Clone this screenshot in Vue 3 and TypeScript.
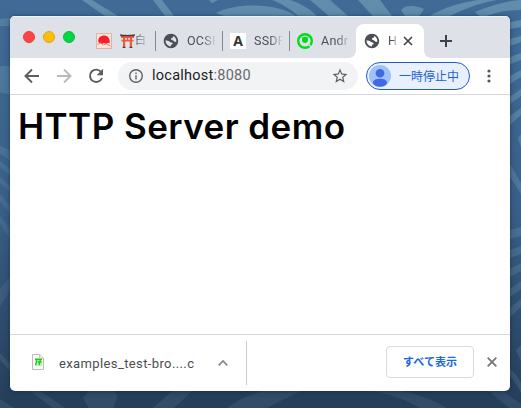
<script setup lang="ts">
interface Tab {
  icon: 'sun' | 'globe' | 'letter' | 'ring'
  title: string
  torii?: boolean
}

const tabs: Tab[] = [
  { icon: 'sun', title: '白', torii: true },
  { icon: 'globe', title: 'OCSP' },
  { icon: 'letter', title: 'SSDP' },
  { icon: 'ring', title: 'Andr' },
]

const globePath =
  'M12 2C6.48 2 2 6.48 2 12s4.48 10 10 10 10-4.48 10-10S17.52 2 12 2zM4.4 11.5c2.500 0 4.200.4 5.700 1.600 1.600 1.300 3.900.4 4.300 2.100.3 1.700-2.200 1.600-2.500 2.700-.2.800.2 1.200-.3 1.700C7.700 19.400 4.400 16 4.400 11.500zM19.500 12.900c-1 .8-2.800.2-3.600-1-.8-1.100-2.300-.7-3.400-1.600-1.100-1-.5-2.300.8-2.600 1.200-.3 2-.9 1.600-2.700 2.800 1.200 4.800 4 4.600 7.900z'
</script>

<template>
  <div class="desktop">
    <svg class="waves" viewBox="0 0 521 408" aria-hidden="true">
      <defs>
        <linearGradient id="sea" x1="0" y1="0" x2="0" y2="1">
          <stop offset="0" stop-color="#416b96" />
          <stop offset=".5" stop-color="#3b6088" />
          <stop offset="1" stop-color="#253e5a" />
        </linearGradient>
        <linearGradient id="foam" gradientUnits="userSpaceOnUse" x1="0" y1="0" x2="0" y2="408">
          <stop offset="0" stop-color="#628dac" />
          <stop offset=".5" stop-color="#4b7397" />
          <stop offset="1" stop-color="#364f6b" />
        </linearGradient>
      </defs>
      <rect width="521" height="408" fill="url(#sea)" />
      <g fill="url(#foam)">
        <path d="M82 0h10l26 16h-13zM153 0h9l12 16h-9zM209 0h9l-6 3zM216 13c20-11 62-10 80 3h-72zM272 0h18c12 4 21 10 27 16h-19c-7-7-16-12-26-16zM310 0h20l18 16h-19zM358 0h22l12 16h-19zM401 10c6-7 18-3 23-1l-5 7h-14zM430 16c15-9 29-13 48-16h19c-21 4-33 9-47 16z" />
        <path d="M475 12c14-6 30-11 46-12v10c-14 0-28 3-39 8z" />
        <path d="M510 22l11-2v7l-11 2zM510 39l11-3v6l-11 4zM510 57l11-4v7l-11 4zM510 76l11-6v7l-11 7zM510 97l11-8v7l-11 8zM510 116l11-8v7l-11 10zM518 138l3-4v13zM510 164l11 19v11l-11-17z" />
        <path d="M510 230l11-3v9l-11 3zM510 250l11-4v8l-11 4zM510 269l11-6v8l-11 6zM510 289l11-8v8l-11 8zM510 308l11-9v8l-11 10zM516 350l5-5v16z" />
        <path opacity=".6" d="M0 19l10-1v8H0zM0 67c4-2 7-1 10 0v28L0 92zM0 146l10 4v10l-10-6zM0 161l10 8v6l-10-8zM0 177l10 9v6l-10-9zM0 194l10 12v8L0 201zM0 216l10 13v10L0 224zM0 289l10-12v13L0 307z" />
        <path opacity=".8" d="M0 353l10 11v7L0 360zM0 399l14 9H0zM30 391h10l25 17H53zM89 391h25l4 5-5 12H89l-6-10zM172 391h20l-18 17h-21zM264 391h37c-10 5-21 10-34 17h-40c12-9 24-14 37-17zM372 391h30c15 3 33 10 45 17h-27c-15-9-30-14-48-17zM489 391h14l18 13v4h-12z" />
        <path d="M510 369c4 3 8 8 11 14v10c-3-7-7-13-11-17z" />
      </g>
    </svg>

    <main class="window">
      <header class="tab-strip">
        <div class="lights"><i class="red" /><i class="yellow" /><i class="green" /></div>
        <div class="tabs">
          <div v-for="tab in tabs" :key="tab.title" class="tab">
            <svg v-if="tab.icon === 'sun'" class="favicon" viewBox="0 0 16 16">
              <rect x=".5" y=".5" width="15" height="15" fill="#f2e5da" stroke="#e3b3aa" />
              <path d="M2.500 9.500C1.500 5 4.500 2.500 8.500 2.600S14.500 7 13.500 10.500L12 9.700 10 11 8 10 6 11z" fill="#f5202b" />
              <path d="M1.500 11.500l3-1.500 3 2 3-1 4 2" fill="none" stroke="#ef8580" />
            </svg>
            <svg v-else-if="tab.icon === 'globe'" class="favicon" viewBox="0 0 24 24"><path :d="globePath" fill="#4b4f54" fill-rule="evenodd" transform="translate(-1 -1) scale(1.080)" /></svg>
            <span v-else-if="tab.icon === 'letter'" class="favicon letter">A</span>
            <svg v-else class="favicon" viewBox="0 0 16 16">
              <circle cx="8" cy="8" r="6.800" fill="none" stroke="#00dc18" stroke-width="2.400" />
              <circle cx="8" cy="6.800" r="3.100" fill="#00dc18" />
              <path d="M11.400 11.200l3.300 3" stroke="#dee1e8" stroke-width="1.400" />
              <path d="M4.600 4.600l1.700 1M11.400 4.600l-1.700 1" stroke="#00dc18" />
            </svg>
            <span class="tab-title">
              <svg v-if="tab.torii" class="torii" viewBox="0 0 15 14">
                <path d="M1 2h13v2H1zM1.500 5.700h12v1.800h-12zM3 3.500h2.200v10H3zM9.800 3.500H12v10H9.800zM6.800 4h1.400v3H6.800z" fill="#ea5c3c" />
                <path d="M0 .3c4 .8 11 .8 15 0l-.5 1.900H.5zM2.700 12.700h2.700V14H2.700zM9.600 12.700h2.700V14H9.600z" fill="#4a3b38" />
              </svg>{{ tab.title }}
            </span>
          </div>
          <div class="tab active">
            <svg class="favicon" viewBox="0 0 24 24"><path :d="globePath" fill="#4b4f54" fill-rule="evenodd" transform="translate(-1 -1) scale(1.080)" /></svg>
            <span class="tab-title">H</span>
            <svg class="close" viewBox="0 0 10 10"><path d="M1 1l8 8M9 1L1 9" /></svg>
          </div>
        </div>
        <svg class="new-tab" viewBox="0 0 12 12"><path d="M6 0v12M0 6h12" /></svg>
      </header>

      <nav class="toolbar">
        <div class="nav-buttons">
          <svg viewBox="0 0 16 16"><path d="M15 8H2M8 1.500L1.500 8 8 14.500" /></svg>
          <svg class="disabled" viewBox="0 0 16 16"><path d="M1 8h13M8 1.500L14.500 8 8 14.500" /></svg>
          <svg viewBox="0 0 16 16"><path d="M13.300 4.300A6.200 6.200 0 1 0 14 10" /><path class="solid" d="M15 .8v6.400H8.600z" /></svg>
        </div>
        <div class="address">
          <svg class="info" viewBox="0 0 16 16"><circle cx="8" cy="8" r="6.300" /><path d="M8 7.200v4.200M8 4.500V6" /></svg>
          <span class="url">localhost<em>:8080</em></span>
          <svg class="star" viewBox="0 0 24 24"><path d="M22 9.240l-7.190-.62L12 2 9.190 8.630 2 9.240l5.460 4.730L5.820 21 12 17.270 18.180 21l-1.630-7.030L22 9.240zM12 15.400l-3.760 2.270 1-4.280-3.320-2.880 4.380-.38L12 6.100l1.710 4.040 4.380.38-3.320 2.880 1 4.280L12 15.400z" /></svg>
        </div>
        <div class="profile">
          <svg viewBox="0 0 22 22"><circle cx="11" cy="11" r="11" fill="#a0c2fa" /><circle cx="11" cy="8.300" r="4.300" fill="#4169e1" /><path d="M3.800 18.200c0-3 3.200-4.400 7.200-4.400s7.200 1.400 7.200 4.400c-3.200 4.800-11.200 4.800-14.400 0z" fill="#4169e1" /></svg>
          <span>一時停止中</span>
        </div>
        <svg class="menu" viewBox="0 0 4 14"><circle cx="2" cy="2" r="1.600" /><circle cx="2" cy="7" r="1.600" /><circle cx="2" cy="12" r="1.600" /></svg>
      </nav>

      <section class="page"><h1>HTTP Server demo</h1></section>

      <footer class="downloads">
        <div class="download">
          <svg class="file" viewBox="0 0 12 16">
            <path d="M.5.500h7.300l3.700 3.700v11.300H.5z" fill="#fafafa" stroke="#bcbcbc" />
            <path d="M7.700.5v3.800h3.800" fill="#eee" stroke="#bcbcbc" />
            <path d="M3 4h7v8H3z" fill="#b9f2a9" />
            <path d="M3 5.300h7M4.700 5v2.500L3.500 11M8.500 5L7 11M6 8h3.500" fill="none" stroke="#20c522" stroke-width="1.300" />
          </svg>
          <span class="filename">examples_test-bro....c</span>
          <svg class="caret" viewBox="0 0 10 6"><path d="M.7 5.300L5 1l4.300 4.300" /></svg>
        </div>
        <button type="button">すべて表示</button>
        <svg class="dismiss" viewBox="0 0 10 10"><path d="M.7.700l8.600 8.600M9.300.7L.7 9.300" /></svg>
      </footer>
    </main>
  </div>
</template>

<style>
body { margin: 0; overflow: hidden; }
</style>

<style scoped>
* { box-sizing: border-box; }
.desktop { position: relative; width: 521px; height: 408px; padding: 16px 11px 17px 10px; font-family: Roboto, "Noto Sans CJK JP", sans-serif; }
.waves { position: absolute; inset: 0; width: 521px; height: 408px; }
.window { position: relative; display: flex; flex-direction: column; width: 500px; height: 375px; overflow: hidden; border-radius: 5px; background: #fff; box-shadow: 0 0 2px #1b2b4699, 0 2px 7px #10203a66; }
svg { display: block; flex: none; }
.tab-strip { display: flex; height: 42px; background: #dee1e8; box-shadow: inset 0 1px #f0f1f5; }
.lights { display: flex; gap: 8px; width: 78px; padding: 15px 0 0 13px; }
.lights i { width: 12px; height: 12px; border: 1px solid; border-radius: 50%; }
.lights .red { background: #ff4543; border-color: #e63f40; }
.lights .yellow { background: #ffbe00; border-color: #dda718; }
.lights .green { background: #00d742; border-color: #12b83e; }
.tabs { display: flex; padding-top: 8px; }
.tab { position: relative; display: flex; align-items: center; width: 67px; height: 34px; padding-left: 8px; }
.tab:not(:nth-last-child(-n+2))::after { content: ""; width: 1px; height: 20px; margin-left: auto; margin-right: -1px; background: #85888e; }
.favicon { display: block; flex: none; width: 16px; height: 16px; }
.letter { background: #fff; color: #333; font: 700 14px/16px "Open Sans", sans-serif; text-align: center; }
.tab-title { display: flex; align-items: center; width: 28px; margin-left: 8px; overflow: hidden; white-space: nowrap; color: #4d5055; font-size: 12.500px; line-height: 18px; letter-spacing: .25px; mask-image: linear-gradient(to right, #000 55%, transparent 105%); }
.torii { width: 15px; height: 14px; }
.tab:first-child .tab-title { font-size: 11px; }
.active { width: 68px; background: #fff; border-radius: 8px 8px 0 0; }
.active::before { content: ""; position: absolute; right: 100%; bottom: 0; width: 7px; height: 7px; background: radial-gradient(circle at 0 0, transparent 6.500px, #fff 7px); }
.active::after { content: ""; position: absolute; left: 100%; bottom: 0; width: 7px; height: 7px; background: radial-gradient(circle at 100% 0, transparent 6.500px, #fff 7px); }
.active .tab-title { width: 9px; }
.close { width: 10px; height: 10px; margin-left: 6px; }
.close path { stroke: #414449; stroke-width: 1.700; }
.new-tab { width: 12px; height: 12px; margin: 19px 0 0 16px; }
.new-tab path { stroke: #3d4044; stroke-width: 2; }
.toolbar { display: flex; align-items: center; flex: none; height: 37px; padding: 0 13px 1px 14px; border-bottom: 1px solid #d5d7dc; }
.nav-buttons { display: flex; gap: 16px; width: 94px; }
.nav-buttons svg { width: 16px; height: 16px; }
.nav-buttons path { fill: none; stroke: #5b5e63; stroke-width: 1.900; }
.nav-buttons .disabled path { stroke: #b8babd; }
.nav-buttons .solid { fill: #5b5e63; stroke: none; }
.address { display: flex; align-items: center; width: 240px; height: 28px; padding: 0 9px 0 10px; border-radius: 14px; background: #f1f3f4; }
.info { width: 16px; height: 16px; }
.info circle, .info path { fill: none; stroke: #5d6065; stroke-width: 1.400; }
.url { margin-left: 8px; color: #202124; font-size: 14.500px; letter-spacing: .25px; }
.url em { color: #686b70; font-style: normal; }
.star { width: 18px; height: 18px; margin-left: auto; fill: #5c5f64; }
.profile { display: flex; align-items: center; width: 104px; height: 28px; margin-left: 8px; padding-left: 2px; border: 1px solid #215bd0; border-radius: 14px; background: #e8f0fc; color: #2360d4; font-family: "Noto Sans CJK JP", sans-serif; font-size: 12px; white-space: nowrap; }
.profile svg { width: 22px; height: 22px; margin-right: 8px; }
.menu { width: 4px; height: 14px; margin-left: auto; margin-right: 6px; fill: #55585d; }
.page { flex: 1; padding: 10px 8px 0; }
h1 { margin: 0; color: #000; font: 600 35px/42px Inter, sans-serif; letter-spacing: .45px; white-space: nowrap; }
.downloads { display: flex; align-items: center; flex: none; height: 57px; padding: 0 13px 0 0; border-top: 1px solid #d8d8da; }
.download { display: flex; align-items: center; width: 237px; height: 44px; padding-left: 22px; border-right: 1px solid #cacaca; }
.file { width: 12px; height: 16px; margin-bottom: 2px; }
.filename { width: 136px; margin-left: 15px; color: #4b4d51; font-size: 13px; letter-spacing: .38px; white-space: nowrap; }
.caret { width: 10px; height: 6px; margin-left: 23px; }
.caret path { fill: none; stroke: #85878a; stroke-width: 1.700; }
button { width: 88px; height: 32px; margin: 0 13px 2px auto; padding: 0 0 2px; border: 1px solid #d9dbdf; border-radius: 4px; background: #fff; color: #1967e2; font: 700 11px/18px "Noto Sans CJK JP", sans-serif; }
.dismiss { width: 10px; height: 10px; margin-bottom: 2px; }
.dismiss path { fill: none; stroke: #77797c; stroke-width: 1.900; }
</style>
